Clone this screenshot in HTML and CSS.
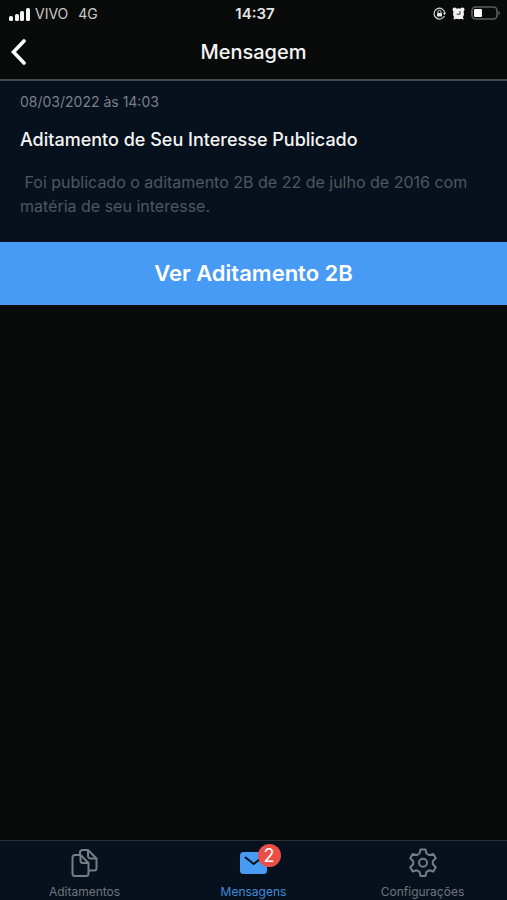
FILE: index.html
```html
<!DOCTYPE html>
<html lang="pt-BR">
<head>
<meta charset="utf-8">
<meta name="viewport" content="width=device-width, initial-scale=1">
<title>Mensagem</title>
<link rel="stylesheet" href="styles.css">
</head>
<body>
<div class="status">
  <div class="status-left">
    <svg width="21" height="14" viewBox="0 0 21 14" fill="#f4f4f4" aria-hidden="true"><rect x="0" y="9" width="4" height="5" rx="1.500"/><rect x="6" y="7" width="4" height="7" rx="1.500"/><rect x="11" y="4" width="4" height="10" rx="1.500"/><rect x="17" y="1" width="4" height="13" rx="1.500"/></svg>
    <span>VIVO</span>
    <span class="network">4G</span>
  </div>
  <span class="clock">14:37</span>
  <div class="status-right">
    <svg width="13" height="13" viewBox="0 0 13 13" fill="none" stroke="#d8d8d8" aria-hidden="true"><path d="M11.400 9A5.400 5.400 0 1 1 11.900 6" stroke-width="1.200"/><path d="M9.800 5.800h3.200l-1.500 2.400z" fill="#d8d8d8" stroke="none"/><rect x="4" y="6" width="5" height="3.600" rx=".6" fill="#e8e8e8" stroke="none"/><path d="M5 6V4.800a1.500 1.500 0 0 1 3 0V6"/></svg>
    <svg width="13" height="13" viewBox="0 0 13 13" aria-hidden="true"><g fill="#f0f0f0"><circle cx="6.500" cy="6.700" r="5.500"/><circle cx="2.600" cy="2.600" r="2.100"/><circle cx="10.400" cy="2.600" r="2.100"/><path d="M1.200 12.500l1.500-4 3 3zM11.800 12.500l-1.500-4-3 3z"/></g><path d="M8 4v3.200H4.800" fill="none" stroke="#333" stroke-width="1"/></svg>
    <svg width="30" height="15" viewBox="0 0 30 15" aria-hidden="true"><rect x="1" y="1" width="25" height="12" rx="3.500" fill="none" stroke="#5d5f5f" stroke-width="1.600"/><rect x="3" y="3" width="8" height="8" rx="1" fill="#fff"/><path d="M27.500 5c2 .6 2 3.600 0 4.200z" fill="#5d5f5f"/></svg>
  </div>
</div>
<header class="nav">
  <button class="back" type="button" aria-label="Voltar"><svg width="16" height="26" viewBox="0 0 16 26" fill="none" stroke="#fff" stroke-width="3.600" stroke-linecap="round" stroke-linejoin="miter" aria-hidden="true"><path d="M14 2L3.500 13 14 24"/></svg></button>
  <h1>Mensagem</h1>
</header>
<main>
  <article class="message">
    <time datetime="2022-03-08T14:03">08/03/2022 às 14:03</time>
    <h2>Aditamento de Seu Interesse Publicado</h2>
    <p>&nbsp;Foi publicado o aditamento 2B de 22 de julho de 2016 com matéria de seu interesse.</p>
  </article>
  <button class="action" type="button">Ver Aditamento 2B</button>
</main>
<nav class="tabs">
  <a href="#aditamentos">
    <svg width="28" height="30" viewBox="0 0 28 30" fill="none" stroke="#777d84" stroke-width="2" stroke-linejoin="round" aria-hidden="true"><path d="M4 7h5.500l8 8v10.500a2.500 2.500 0 0 1-2.500 2.500H4a2.500 2.500 0 0 1-2.500-2.500v-16A2.500 2.500 0 0 1 4 7z"/><path d="M9.500 7v5.500a2.500 2.500 0 0 0 2.500 2.500h5.500"/><path d="M9 7V4.500A2.500 2.500 0 0 1 11.500 2H17l8.500 8.500v9.500A2.500 2.500 0 0 1 23 22.500h-5.500"/><path d="M17 2v6a2.500 2.500 0 0 0 2.500 2.500h6"/></svg>
    <span>Aditamentos</span>
  </a>
  <a class="active" href="#mensagens">
    <span class="mail">
      <svg width="28" height="30" viewBox="0 0 28 30" aria-hidden="true"><rect x="0" y="4" width="27" height="22" rx="3.500" fill="#479bf4"/><path d="M5.500 9.500l8.200 6.500 8.200-6.500" fill="none" stroke="#07111d" stroke-width="2" stroke-linecap="round" stroke-linejoin="round"/></svg>
      <span class="badge">2</span>
    </span>
    <span>Mensagens</span>
  </a>
  <a href="#configuracoes">
    <svg width="28" height="30" viewBox="0 0 28 30" fill="none" stroke="#777d84" stroke-width="2" stroke-linejoin="round" aria-hidden="true"><path d="M11.500 1.500h5l1 4 2.800 1.600 4-1.200 2.500 4.300-3 2.900v3.200l3 2.900-2.500 4.300-4-1.200-2.800 1.600-1 4h-5l-1-4-2.800-1.600-4 1.200-2.500-4.300 3-2.900v-3.200l-3-2.900 2.500-4.300 4 1.200 2.800-1.600z"/><circle cx="14" cy="14.700" r="4"/></svg>
    <span>Configurações</span>
  </a>
</nav>
</body>
</html>
```
FILE: styles.css
```css
* {
  box-sizing: border-box;
}

body {
  margin: 0;
  min-height: 100vh;
  display: flex;
  flex-direction: column;
  background: #080b0a;
  color: #f4f4f4;
  font-family: Inter, "Liberation Sans", sans-serif;
}

h1,
h2,
p {
  margin: 0;
}

button {
  border: 0;
  font-family: inherit;
  cursor: pointer;
}

svg {
  display: block;
}

.status {
  display: grid;
  grid-template-columns: 1fr auto 1fr;
  align-items: center;
  height: 27px;
  padding: 0 6px 0 9px;
  font-size: 14px;
  color: #c8c8c8;
}

.status-left,
.status-right {
  display: flex;
  align-items: center;
  gap: 5px;
}

.status-right {
  justify-content: flex-end;
  gap: 6px;
}

.network {
  margin-left: 5px;
}

.clock {
  font-size: 15px;
  font-weight: 600;
  color: #e4e4e4;
}

.nav {
  display: grid;
  grid-template-columns: 40px 1fr 40px;
  align-items: center;
  height: 54px;
  padding-bottom: 2px;
  border-bottom: 2px solid #43484d;
}

.back {
  padding: 0 0 0 10px;
  background: none;
}

h1 {
  font-size: 20px;
  font-weight: 500;
  line-height: 24px;
  text-align: center;
}

main {
  flex: 1;
}

.message {
  padding: 12px 20px 24px;
  background: #07111d;
}

time {
  display: block;
  font-size: 14px;
  line-height: 18px;
  color: #7b7f86;
}

h2 {
  margin: 17px 0 18px;
  font-size: 18px;
  font-weight: 500;
  line-height: 24px;
}

p {
  font-size: 16px;
  line-height: 24px;
  color: #50565f;
}

.action {
  display: block;
  width: 100%;
  padding: 18px;
  background: #479bf4;
  color: #fff;
  font-size: 22px;
  font-weight: 600;
  line-height: 27px;
}

.tabs {
  display: grid;
  grid-template-columns: repeat(3, 1fr);
  height: 60px;
  padding-top: 7px;
  border-top: 1px solid #2b3036;
  background: #07111d;
}

.tabs a {
  display: flex;
  flex-direction: column;
  align-items: center;
  gap: 6px;
  color: #6f757c;
  font-size: 12px;
  line-height: 16px;
  text-decoration: none;
}

.tabs .active {
  color: #3f8bdc;
}

.mail {
  position: relative;
}

.badge {
  position: absolute;
  top: -4px;
  left: 18px;
  width: 23px;
  height: 23px;
  border-radius: 50%;
  background: #eb4e46;
  color: #fff;
  font-size: 18px;
  line-height: 23px;
  text-align: center;
}
```
